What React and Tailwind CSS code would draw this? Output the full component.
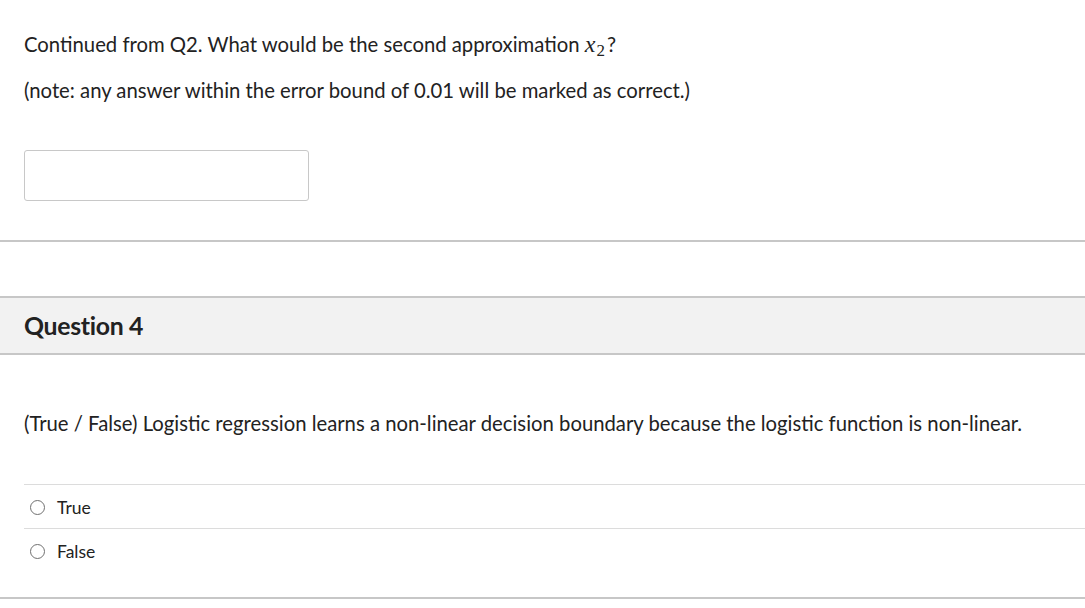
export default function App() {
  return (
    <div className="min-h-[608px] bg-white text-[#222] font-['Lato','Liberation_Sans',sans-serif] text-[20.3px] leading-6">
      {/* Question 3 body */}
      <div className="px-6 pt-8">
        <p className="h-6">
          Continued from Q2. What would be the second approximation{' '}
          <span className="font-['Liberation_Serif',serif] italic text-[24px] leading-none">x</span>
          <sub className="font-['Liberation_Serif',serif] text-[17px] leading-none ml-[1px]">2</sub>
          <span className="ml-[2px]">?</span>
        </p>
        <p className="mt-[22px]">(note: any answer within the error bound of 0.01 will be marked as correct.)</p>
        <div className="mt-12 w-[285px] h-[51px] border border-[#c8c8c8] rounded-[3px]" />
      </div>
      <div className="mt-[39px] h-[2px] bg-[#c7c7c7]" />

      {/* Question 4 */}
      <div className="mt-[54px] h-[59px] bg-[#f2f2f2] border-t-2 border-b-2 border-[#c7c7c7] px-6 flex items-center">
        <h2 className="text-[24.8px] font-bold tracking-[-0.3px]">Question 4</h2>
      </div>
      <div className="px-6 pt-[56px]">
        <p>(True / False) Logistic regression learns a non-linear decision boundary because the logistic function is non-linear.</p>
      </div>
      <div className="mt-[49px] ml-6">
        {['True', 'False'].map((label) => (
          <div key={label} className="border-t border-[#dcdcdc] h-[44px] flex items-center pt-[2px]">
            <span className="ml-[6px] w-[15px] h-[15px] rounded-full border border-[#707070] bg-white" />
            <span className="ml-[12px] text-[17.5px]">{label}</span>
          </div>
        ))}
      </div>
      <div className="mt-[25px] h-[2px] bg-[#c7c7c7]" />
    </div>
  )
}
